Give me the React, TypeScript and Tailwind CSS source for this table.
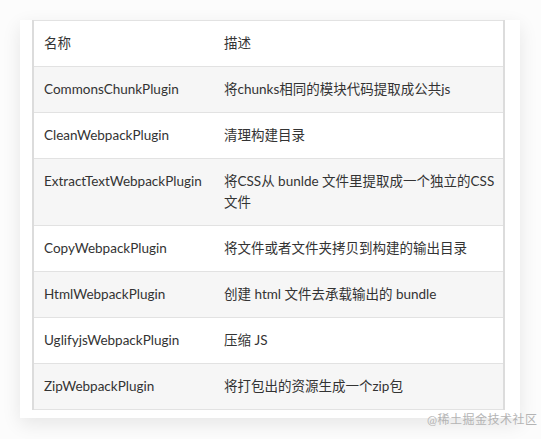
const ROWS: [string, React.ReactNode][] = [
  ['CommonsChunkPlugin', '将chunks相同的模块代码提取成公共js'],
  ['CleanWebpackPlugin', '清理构建目录'],
  [
    'ExtractTextWebpackPlugin',
    <>
      将CSS从 bunlde 文件里提取成一个独立的CSS
      <br />
      文件
    </>,
  ],
  ['CopyWebpackPlugin', '将文件或者文件夹拷贝到构建的输出目录'],
  ['HtmlWebpackPlugin', '创建 html 文件去承载输出的 bundle'],
  ['UglifyjsWebpackPlugin', '压缩 JS'],
  ['ZipWebpackPlugin', '将打包出的资源生成一个zip包'],
];

const FONT = { fontFamily: 'Lato, "Noto Sans CJK SC", sans-serif' };

export default function App() {
  return (
    <div className="relative w-[541px] h-[439px] bg-[#fcfcfc] pt-5 pl-5" style={FONT}>
      {/* Card */}
      <div className="w-[500px] h-[398px] bg-white pl-3 pr-[15px] shadow-[0_6px_18px_rgba(0,0,0,0.09)]">
        <table className="w-[473px] border-collapse border-x-2 border-[#dcdcdc] text-[13.5px] leading-[21px] text-[#333]">
          <thead>
            <tr className="border-y border-[#e2e2e2] bg-white">
              <th className="w-[180px] pl-[10px] py-3 text-left font-normal">名称</th>
              <th className="pl-[11px] py-3 text-left font-normal">描述</th>
            </tr>
          </thead>
          <tbody>
            {ROWS.map(([name, desc], i) => (
              <tr
                key={name}
                className={`border-b border-[#e2e2e2] ${i % 2 === 0 ? 'bg-[#f6f6f6]' : 'bg-white'}`}
              >
                <td className="pl-[10px] py-3 align-top whitespace-nowrap">{name}</td>
                <td className="pl-[11px] py-3 align-top whitespace-nowrap">{desc}</td>
              </tr>
            ))}
          </tbody>
        </table>
      </div>

      {/* Watermark */}
      <span className="absolute left-[427px] top-[412px] text-[12px] leading-4 text-[#b4b4b4] tracking-[0.5px]">
        @稀土掘金技术社区
      </span>
    </div>
  );
}
